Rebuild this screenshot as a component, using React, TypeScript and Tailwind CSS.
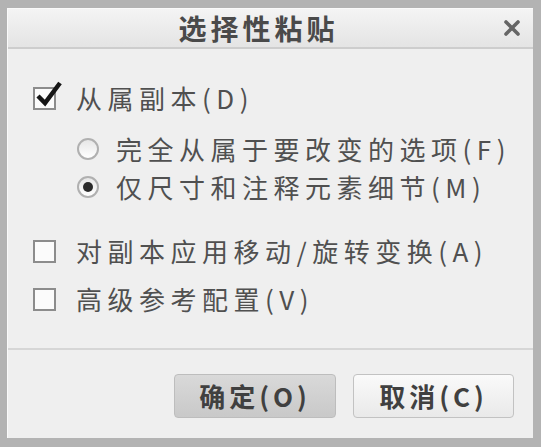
import React from "react";

const font = { fontFamily: '"Noto Sans CJK SC", "Noto Sans", sans-serif' };

const CheckBox = ({ checked }: { checked?: boolean }) => (
  <div className="relative w-[23px] h-[23px] shrink-0 border-[2px] border-[#8c8c8c] bg-[#fbfbfb]">
    {checked && (
      <svg viewBox="0 0 28 28" className="absolute left-[0px] top-[-9px] w-[28px] h-[28px]">
        <path d="M3 16 L10 23 L25 3" fill="none" stroke="#151515" strokeWidth="4.5" strokeLinejoin="miter" />
      </svg>
    )}
  </div>
);

const Radio = ({ checked }: { checked?: boolean }) => (
  <div className="w-[22px] h-[22px] shrink-0 rounded-full border-[2px] border-[#b0b0b0] bg-gradient-to-b from-[#e6e6e6] to-[#ffffff] flex items-center justify-center">
    {checked && <div className="w-[10px] h-[10px] rounded-full bg-[#2a2a2a]" />}
  </div>
);

const App = () => {
  return (
    <div
      className="w-[541px] h-[447px] bg-[#b3b3b3] pl-[7px] pt-[8px] pr-[8px] pb-[9px]"
      style={font}
    >
      <div className="w-full h-full flex flex-col bg-[#efefef] border-l border-t border-[#fafafa]">
        {/* Title bar */}
        <div className="relative h-[40px] shrink-0 flex items-center justify-center pr-[24px] bg-gradient-to-b from-[#f4f4f4] to-[#e4e4e4] border-b-[2px] border-[#cdcdcd]">
          <span className="text-[28px] font-bold text-[#4a4a4a] tracking-[4px] leading-none">选择性粘贴</span>
          <svg viewBox="0 0 16 16" className="absolute right-[13px] top-[11px] w-[16px] h-[16px]">
            <path d="M2 2 L14 14 M14 2 L2 14" stroke="#666" strokeWidth="3.6" strokeLinecap="round" />
          </svg>
        </div>

        {/* Body */}
        <div className="flex-1 pl-[25px] pt-[31px] text-[26px] text-[#505050] tracking-[5.5px] leading-none">
          <div className="h-[36px] flex items-center gap-[20px]">
            <CheckBox checked />
            <span>从属副本(D)</span>
          </div>
          <div className="pl-[44px] mt-[14px]">
            <div className="h-[38px] flex items-center gap-[17px]">
              <Radio />
              <span>完全从属于要改变的选项(F)</span>
            </div>
            <div className="h-[38px] flex items-center gap-[17px]">
              <Radio checked />
              <span>仅尺寸和注释元素细节(M)</span>
            </div>
          </div>
          <div className="h-[36px] mt-[27px] flex items-center gap-[20px]">
            <CheckBox />
            <span>对副本应用移动/旋转变换(A)</span>
          </div>
          <div className="h-[36px] mt-[12px] flex items-center gap-[20px]">
            <CheckBox />
            <span>高级参考配置(V)</span>
          </div>
        </div>

        {/* Footer */}
        <div className="h-[90px] shrink-0 border-t-[2px] border-[#d6d6d6] flex justify-end items-start pt-[24px] pr-[19px] gap-[17px]">
          <button className="w-[162px] h-[44px] rounded-[4px] border border-[#bdbdbd] bg-gradient-to-b from-[#d9d9d9] to-[#c9c9c9] text-[26px] font-bold text-[#404040] tracking-[4px] leading-none">
            确定(O)
          </button>
          <button className="w-[161px] h-[44px] rounded-[4px] border border-[#c2c2c2] bg-gradient-to-b from-[#fafafa] to-[#e9e9e9] text-[26px] font-bold text-[#404040] tracking-[4px] leading-none">
            取消(C)
          </button>
        </div>
      </div>
    </div>
  );
};

export default App;
